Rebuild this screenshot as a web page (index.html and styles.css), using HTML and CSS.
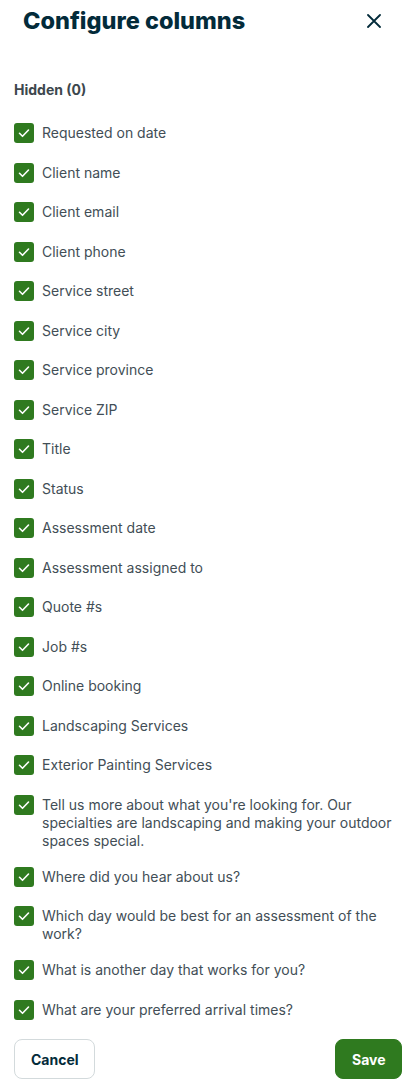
FILE: index.html
```html
<!DOCTYPE html>
<html lang="en">
<head>
<meta charset="utf-8">
<title>Configure columns</title>
<link rel="stylesheet" href="styles.css">
</head>
<body>
<div class="panel">
  <header class="header">
    <h1 class="title">Configure columns</h1>
    <button class="close" aria-label="Close">
      <svg width="14" height="14" viewBox="0 0 14 14"><path d="M1 1L13 13M13 1L1 13" stroke="#032b3a" stroke-width="1.8" stroke-linecap="round" fill="none"/></svg>
    </button>
  </header>
  <h2 class="section">Hidden (0)</h2>
  <ul class="list">
    <li class="item"><span class="box"><svg viewBox="0 0 20 20"><path d="M5.5 10.3l3 3 6-6.3" /></svg></span><span class="label">Requested on date</span></li>
    <li class="item"><span class="box"><svg viewBox="0 0 20 20"><path d="M5.5 10.3l3 3 6-6.3" /></svg></span><span class="label">Client name</span></li>
    <li class="item"><span class="box"><svg viewBox="0 0 20 20"><path d="M5.5 10.3l3 3 6-6.3" /></svg></span><span class="label">Client email</span></li>
    <li class="item"><span class="box"><svg viewBox="0 0 20 20"><path d="M5.5 10.3l3 3 6-6.3" /></svg></span><span class="label">Client phone</span></li>
    <li class="item"><span class="box"><svg viewBox="0 0 20 20"><path d="M5.5 10.3l3 3 6-6.3" /></svg></span><span class="label">Service street</span></li>
    <li class="item"><span class="box"><svg viewBox="0 0 20 20"><path d="M5.5 10.3l3 3 6-6.3" /></svg></span><span class="label">Service city</span></li>
    <li class="item"><span class="box"><svg viewBox="0 0 20 20"><path d="M5.5 10.3l3 3 6-6.3" /></svg></span><span class="label">Service province</span></li>
    <li class="item"><span class="box"><svg viewBox="0 0 20 20"><path d="M5.5 10.3l3 3 6-6.3" /></svg></span><span class="label">Service ZIP</span></li>
    <li class="item"><span class="box"><svg viewBox="0 0 20 20"><path d="M5.5 10.3l3 3 6-6.3" /></svg></span><span class="label">Title</span></li>
    <li class="item"><span class="box"><svg viewBox="0 0 20 20"><path d="M5.5 10.3l3 3 6-6.3" /></svg></span><span class="label">Status</span></li>
    <li class="item"><span class="box"><svg viewBox="0 0 20 20"><path d="M5.5 10.3l3 3 6-6.3" /></svg></span><span class="label">Assessment date</span></li>
    <li class="item"><span class="box"><svg viewBox="0 0 20 20"><path d="M5.5 10.3l3 3 6-6.3" /></svg></span><span class="label">Assessment assigned to</span></li>
    <li class="item"><span class="box"><svg viewBox="0 0 20 20"><path d="M5.5 10.3l3 3 6-6.3" /></svg></span><span class="label">Quote #s</span></li>
    <li class="item"><span class="box"><svg viewBox="0 0 20 20"><path d="M5.5 10.3l3 3 6-6.3" /></svg></span><span class="label">Job #s</span></li>
    <li class="item"><span class="box"><svg viewBox="0 0 20 20"><path d="M5.5 10.3l3 3 6-6.3" /></svg></span><span class="label">Online booking</span></li>
    <li class="item"><span class="box"><svg viewBox="0 0 20 20"><path d="M5.5 10.3l3 3 6-6.3" /></svg></span><span class="label">Landscaping Services</span></li>
    <li class="item"><span class="box"><svg viewBox="0 0 20 20"><path d="M5.5 10.3l3 3 6-6.3" /></svg></span><span class="label">Exterior Painting Services</span></li>
    <li class="item"><span class="box"><svg viewBox="0 0 20 20"><path d="M5.5 10.3l3 3 6-6.3" /></svg></span><span class="label">Tell us more about what you're looking for. Our specialties are landscaping and making your outdoor spaces special.</span></li>
    <li class="item"><span class="box"><svg viewBox="0 0 20 20"><path d="M5.5 10.3l3 3 6-6.3" /></svg></span><span class="label">Where did you hear about us?</span></li>
    <li class="item"><span class="box"><svg viewBox="0 0 20 20"><path d="M5.5 10.3l3 3 6-6.3" /></svg></span><span class="label">Which day would be best for an assessment of the work?</span></li>
    <li class="item"><span class="box"><svg viewBox="0 0 20 20"><path d="M5.5 10.3l3 3 6-6.3" /></svg></span><span class="label">What is another day that works for you?</span></li>
    <li class="item"><span class="box"><svg viewBox="0 0 20 20"><path d="M5.5 10.3l3 3 6-6.3" /></svg></span><span class="label">What are your preferred arrival times?</span></li>
  </ul>
  <footer class="footer">
    <button class="btn btn-cancel">Cancel</button>
    <button class="btn btn-save">Save</button>
  </footer>
</div>
</body>
</html>
```
FILE: styles.css
```css
* { box-sizing: border-box; }
html, body { margin: 0; padding: 0; background: #fff; }
body {
  font-family: Inter, "Noto Sans", "Liberation Sans", sans-serif;
  color: #424e56;
}
.panel {
  width: 412px;
  padding: 7px 10px 0 14px;
}
.header {
  display: flex;
  align-items: center;
  justify-content: space-between;
  padding-left: 9px;
  height: 28px;
}
.title {
  margin: 0;
  font-size: 23.5px;
  line-height: 28px;
  font-weight: 800;
  color: #032b3a;
  letter-spacing: 0;
}
.close {
  border: 0;
  background: none;
  padding: 0;
  width: 14px;
  height: 14px;
  margin-right: 21px;
  display: flex;
}
.section {
  margin: 44.5px 0 0 0;
  font-size: 14px;
  line-height: 20px;
  font-weight: 700;
  color: #3d474d;
}
.list {
  list-style: none;
  margin: 23.5px 0 0 0;
  padding: 0;
  display: flex;
  flex-direction: column;
  gap: 17px;
}
.item {
  display: flex;
  align-items: flex-start;
  gap: 8px;
  min-height: 22.5px;
}
.box {
  flex: none;
  width: 20px;
  height: 20px;
  border-radius: 3px;
  background: #2f7a1f;
  display: flex;
}
.box svg {
  width: 20px;
  height: 20px;
  fill: none;
  stroke: #fff;
  stroke-width: 1.6;
  stroke-linecap: round;
  stroke-linejoin: round;
}
.label {
  font-size: 14px;
  line-height: 18px;
  padding-top: 1px;
  color: #424e56;
}
.footer {
  display: flex;
  justify-content: space-between;
  margin-top: 17px;
}
.btn {
  font-family: Inter, "Noto Sans", "Liberation Sans", sans-serif;
  font-size: 14px;
  font-weight: 700;
  height: 40px;
  border-radius: 8px;
  padding: 0 16px;
  cursor: pointer;
}
.btn-cancel {
  width: 81px;
  background: #fff;
  border: 1px solid #d3dadc;
  color: #032b3a;
}
.btn-save {
  width: 67px;
  background: #2f7a1f;
  border: 1px solid #2f7a1f;
  color: #fff;
}
```
